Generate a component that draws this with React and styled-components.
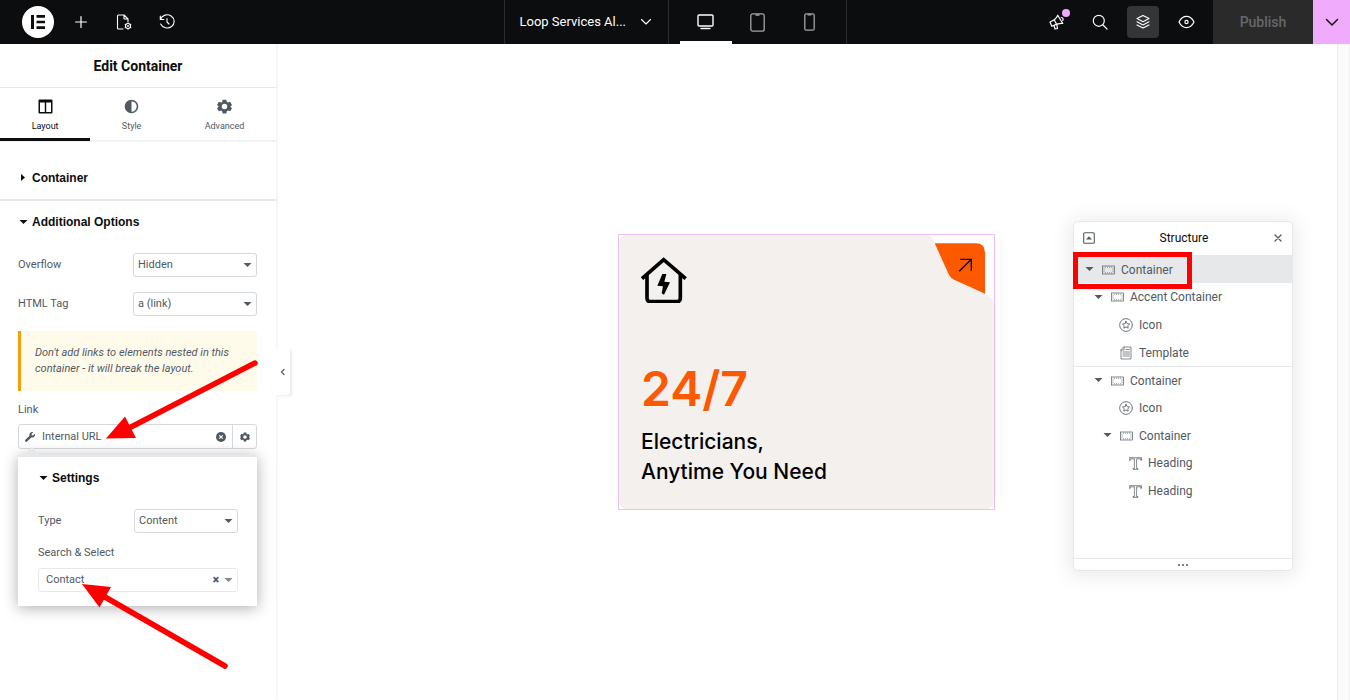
import React from "react";
import styled, { createGlobalStyle } from "styled-components";

const ink = "#0c0d0e";
const slate = "#515962";
const line = "#e6e8ea";
const control = "#d5d8dc";
const red = "#ff0000";

const GlobalStyle = createGlobalStyle`
  *, *::before, *::after { box-sizing: border-box; }
  body { margin: 0; background: #fff; color: ${slate}; font: 11px/16px Roboto, "Liberation Sans", sans-serif; }
  button, select, input { font: inherit; color: inherit; }
  button { padding: 0; border: 0; background: none; cursor: pointer; }
  h1, h2, h3, p, ul { margin: 0; padding: 0; }
  svg { display: block; flex: none; }
`;

const Page = styled.div`
  min-height: 100vh;
  display: flex;
  flex-direction: column;
  position: relative;
`;

/* Top bar */
const TopBar = styled.header`
  display: grid;
  grid-template-columns: 1fr auto 1fr;
  height: 44px;
  background: ${ink};
  color: #fff;
`;
const BarStart = styled.div`
  display: flex;
  align-items: center;
  gap: 11px;
  padding-left: 22px;
`;
const BarEnd = styled.div`
  display: flex;
  align-items: center;
  justify-content: flex-end;
  gap: 11px;
`;
const BarButton = styled.button`
  position: relative;
  width: 32px;
  height: 32px;
  display: grid;
  place-items: center;
  border-radius: 4px;
  background: ${(p) => (p.$on ? "#343537" : "none")};
`;
const Logo = styled(BarButton)`
  border-radius: 50%;
  background: #fff;
`;
const Dot = styled.span`
  position: absolute;
  top: 3px;
  right: 3px;
  width: 8px;
  height: 8px;
  border-radius: 50%;
  background: #f0abfc;
`;
const BarCenter = styled.div`
  display: flex;
`;
const DocButton = styled.button`
  width: 164px;
  display: flex;
  align-items: center;
  justify-content: space-between;
  padding: 0 16px 0 15px;
  border-left: 1px solid #2b2c2e;
  font-size: 13px;
`;
const Devices = styled.div`
  display: flex;
  padding: 0 10px 0 11px;
  border: solid #2b2c2e;
  border-width: 0 1px;
`;
const DeviceButton = styled.button`
  width: 52px;
  display: grid;
  place-items: center;
  color: ${(p) => (p.$on ? "#fff" : "#a4a5a6")};
  box-shadow: ${(p) => (p.$on ? "inset 0 -3px 0 #fff" : "none")};
`;
const PublishGroup = styled.div`
  display: flex;
  align-self: stretch;
`;
const Publish = styled.button`
  width: 100px;
  background: #2a2a2a;
  color: #66686a;
  font-size: 14px;
  font-weight: 500;
`;
const PublishMore = styled.button`
  width: 37px;
  display: grid;
  place-items: center;
  background: #f0abfc;
  color: ${ink};
`;

/* Editing panel */
const Body = styled.div`
  flex: 1;
  display: flex;
`;
const Sidebar = styled.aside`
  position: relative;
  flex: none;
  width: 276px;
  box-shadow: 0 0 3px rgba(0, 0, 0, 0.12);
`;
const PanelTitle = styled.h1`
  height: 44px;
  display: grid;
  place-items: center;
  border-bottom: 1px solid ${line};
  color: ${ink};
  font-size: 14px;
  font-weight: 700;
`;
const Tabs = styled.div`
  display: flex;
  height: 54px;
  border-bottom: 2px solid #f1f2f3;
`;
const Tab = styled.button`
  flex: 1 1 auto;
  height: 53px;
  padding-top: 7px;
  display: flex;
  flex-direction: column;
  align-items: center;
  justify-content: center;
  gap: 4px;
  font-size: 9px;
  color: ${(p) => (p.$on ? ink : slate)};
  border-bottom: 3px solid ${(p) => (p.$on ? ink : "transparent")};
`;
const Section = styled.section`
  border-bottom: ${(p) => (p.$last ? "0" : `2px solid ${line}`)};
  padding: 0 19px 0 18px;
`;
const Heading = styled.button`
  display: flex;
  align-items: center;
  gap: 4px;
  width: 100%;
  height: ${(p) => (p.$tall ? "57px" : "42px")};
  padding-top: ${(p) => (p.$tall ? "14px" : "0")};
  color: ${ink};
  font: 700 12px/16px "Liberation Sans", Arial, sans-serif;
`;
const Fields = styled.div`
  display: flex;
  flex-direction: column;
  gap: 15px;
  padding-top: 10px;
`;
const Field = styled.div`
  display: flex;
  align-items: center;
  justify-content: space-between;
`;
const SelectBox = styled.span`
  position: relative;
  display: flex;
  width: ${(p) => p.$width};
  svg { position: absolute; right: 5px; top: 9px; pointer-events: none; }
`;
const Select = styled.select`
  appearance: none;
  width: 100%;
  height: 24px;
  padding: 0 ${(p) => (p.$inset ? 7 : 4)}px;
  border: 1px solid ${(p) => (p.$inset ? line : control)};
  border-radius: 3px;
  background: #fff;
`;
const Notice = styled.p`
  padding: 14px;
  border-left: 3px solid #f59e0b;
  border-radius: 0 3px 3px 0;
  background: #fffbeb;
  font-style: italic;
`;
const LinkLabel = styled.h3`
  font-size: 11px;
  font-weight: 400;
  padding: 11px 0 6px;
`;
const LinkField = styled.div`
  display: flex;
  height: 25px;
  border: 1px solid ${control};
  border-radius: 3px;
`;
const LinkValue = styled.button`
  flex: 1;
  display: flex;
  align-items: center;
  gap: 7px;
  padding-left: 6px;
`;
const FieldIcon = styled.button`
  width: 24px;
  display: grid;
  place-items: center;
  border-left: 1px solid ${(p) => (p.$divided ? control : "transparent")};
`;
const Popover = styled.div`
  position: relative;
  margin-top: 6px;
  padding: 0 19px 14px 20px;
  border-top: 2px solid ${line};
  background: #fff;
  box-shadow: 0 2px 14px rgba(0, 0, 0, 0.32);
  &::before {
    content: "";
    position: absolute;
    left: 6px;
    top: -10px;
    border: solid transparent;
    border-width: 0 8px 8px;
    border-bottom-color: ${line};
  }
`;
const PopoverField = styled(Field)`
  padding-top: 10px;
`;
const SearchLabel = styled.label`
  display: block;
  padding: 12px 0 7px;
`;
const Clear = styled.button`
  position: absolute;
  right: 18px;
  top: 5px;
  width: 8px;
  line-height: 14px;
  font-weight: 900;
  font-size: 12px;
`;
const Collapse = styled.button`
  position: absolute;
  left: 276px;
  top: 305px;
  width: 14px;
  height: 46px;
  display: grid;
  place-items: center;
  background: #fff;
  border-radius: 0 3px 3px 0;
  box-shadow: 2px 1px 3px rgba(0, 0, 0, 0.09);
`;
const Marks = styled.svg`
  position: absolute;
  left: 0;
  top: 306px;
  pointer-events: none;
`;

/* Canvas */
const Canvas = styled.main`
  flex: 1;
  display: grid;
  place-items: center;
`;
const Gutter = styled.div`
  width: 13px;
  background: #fafafa;
  border-left: 1px solid #ececec;
  border-right: 1px solid #f1f1f1;
`;
const CardFrame = styled.div`
  border: 1px solid #efbdf8;
`;
const Card = styled.a`
  position: relative;
  display: flex;
  flex-direction: column;
  width: 375px;
  height: 274px;
  padding: 22px;
  border-radius: 8px;
  background: #f4f0ee;
  color: #000;
  text-decoration: none;
  font-family: Inter, "Liberation Sans", sans-serif;
`;
const Corner = styled.svg`
  position: absolute;
  top: 0;
  right: 0;
`;
const Figure = styled.span`
  margin-top: auto;
  color: #fc5900;
  font-size: 48px;
  line-height: 56px;
  font-weight: 600;
`;
const Caption = styled.span`
  padding-top: 10px;
  font-size: 21px;
  line-height: 30px;
  font-weight: 500;
`;

/* Structure window */
const Window = styled.section`
  position: absolute;
  right: 57px;
  top: 221px;
  width: 220px;
  border: 1px solid ${line};
  border-radius: 5px;
  background: #fff;
  box-shadow: 0 2px 20px 4px rgba(0, 0, 0, 0.08);
  font-size: 12px;
`;
const WindowBar = styled.header`
  display: flex;
  align-items: center;
  justify-content: space-between;
  height: 33px;
  padding: 0 9px 1px;
`;
const WindowTitle = styled.h2`
  color: ${ink};
  font-size: 12px;
  font-weight: 400;
`;
const Tree = styled.ul`
  list-style: none;
  display: grid;
  grid-auto-rows: 1fr;
  height: 249px;
`;
const Node = styled.li`
  display: flex;
  border-top: ${(p) => (p.$ruled ? `1px solid ${line}` : "0")};
  background: ${(p) => (p.$on ? line : "none")};
`;
const NodeButton = styled.button`
  flex: 1;
  display: flex;
  align-items: center;
  padding-top: 2px;
  padding-left: ${(p) => 10 + p.$depth * 9}px;
`;
const Twisty = styled.span`
  width: ${(p) => (p.$leaf ? "8px" : "17px")};
`;
const Glyph = styled.span`
  width: 14px;
  display: grid;
  place-items: center;
  margin-right: 6px;
`;
const WindowFoot = styled.footer`
  display: grid;
  place-items: center;
  height: 12px;
  margin-top: 54px;
  border-top: 1px solid ${line};
`;
const Highlight = styled.div`
  position: absolute;
  left: -1px;
  top: 30px;
  width: 119px;
  height: 37px;
  border: 5px solid ${red};
  pointer-events: none;
`;

const Line = ({ size = 16, width = size, height = size, box = "0 0 16 16", stroke = 1, children }) => (
  <svg width={width} height={height} viewBox={box} fill="none" stroke="currentColor" strokeWidth={stroke} strokeLinecap="round" strokeLinejoin="round" aria-hidden="true">
    {children}
  </svg>
);
const Caret = ({ right, fill = "currentColor" }) => (
  <svg width="10" height="7" viewBox="0 0 10 7" aria-hidden="true">
    <path fill={fill} d={right ? "M3 0 7 3.500 3 7z" : "M1.500 1h8L5.500 5z"} />
  </svg>
);
const Chevron = ({ stroke = 1.1 }) => (
  <Line width={12} height={8} box="0 0 12 8" stroke={stroke}><path d="M1.500 1.500 6 6l4.500-4.500" /></Line>
);
const Gear = ({ size }) => (
  <svg width={size} height={size} viewBox="0 0 24 24" fill="currentColor" aria-hidden="true">
    <path fillRule="evenodd" d="M9 1h6l.8 3.600 1.800 1L21 4.500l3 5.200-2.700 2.500L24 14.600l-3 5-3.500-1.200-1.800 1L15 23H9l-.8-3.600-1.800-1L3 19.600l-3-5 2.700-2.500L0 9.600l3-5.100 3.500 1.100 1.800-1zM12 7.600a4.400 4.400 0 1 0 0 8.800 4.400 4.400 0 0 0 0-8.800z" />
  </svg>
);

const glyphs = {
  box: (
    <svg width="13" height="10" viewBox="0 0 13 10" fill="none" stroke="currentColor" aria-hidden="true">
      <rect x=".5" y="1" width="12" height="8" strokeWidth=".7" />
      <path d="M3 2.200h7.500M3 7.800h7.500" strokeWidth=".8" strokeDasharray=".8 1.300" />
      <path d="M2 2.800v5M11 2.800v5" strokeWidth=".8" strokeDasharray=".8 1" />
    </svg>
  ),
  star: (
    <Line size={14} box="0 0 14 14" stroke={0.8}>
      <circle cx="7" cy="7" r="6.300" strokeDasharray="2.500 .5" />
      <path d="m7 3.300 1.100 2.300 2.500.4-1.800 1.700.4 2.500L7 9 4.800 10.200l.4-2.500L3.400 6l2.500-.4z" />
    </Line>
  ),
  page: (
    <Line width={12} height={14} box="0 0 12 14" stroke={0.7}>
      <path d="M4 1h7v12H1V4zM4 1v3H1M6 3.500h3.500M3 6h6.500M3 8h6.500M3 10h6.500" />
    </Line>
  ),
  text: (
    <Line size={13} box="0 0 13 13" stroke={0.7}>
      <path d="M.5.700h12v2.600h-.8v-1.500H7.600v9.700h1.400v.9H4v-.9h1.400V1.800H1.300v1.500H.5z" />
    </Line>
  ),
};

const nodes = [
  { label: "Container", glyph: "box", depth: 0, on: true },
  { label: "Accent Container", glyph: "box", depth: 1 },
  { label: "Icon", glyph: "star", depth: 3, leaf: true },
  { label: "Template", glyph: "page", depth: 3, leaf: true },
  { label: "Container", glyph: "box", depth: 1, ruled: true },
  { label: "Icon", glyph: "star", depth: 3, leaf: true },
  { label: "Container", glyph: "box", depth: 2 },
  { label: "Heading", glyph: "text", depth: 4, leaf: true },
  { label: "Heading", glyph: "text", depth: 4, leaf: true },
];

function Header() {
  return (
    <TopBar>
      <BarStart>
        <Logo aria-label="Elementor menu">
          <svg width="14" height="14" viewBox="0 0 14 14" fill={ink} aria-hidden="true">
            <path d="M0 0h3v14H0zM5.500 0H14v2.700H5.500zM5.500 5.700H14v2.600H5.500zM5.500 11.300H14V14H5.500z" />
          </svg>
        </Logo>
        <BarButton aria-label="Add element">
          <Line size={12} box="0 0 12 12" stroke={1.2}><path d="M6 .6v10.800M.6 6h10.800" /></Line>
        </BarButton>
        <BarButton aria-label="Page settings">
          <Line width={16} height={16} stroke={1.1}>
            <path d="M7 15H2.500a1 1 0 0 1-1-1V2a1 1 0 0 1 1-1H8l4 4v2.500M8 1v3.500a.5.500 0 0 0 .5.500H12" />
            <circle cx="12" cy="12" r="2.500" />
            <circle cx="12" cy="12" r=".4" />
            <path d="M12 8.800v.6M12 14.600v.6M9.200 10.400l.5.300M14.300 13.300l.5.300M9.200 13.600l.5-.3M14.300 10.700l.5-.3" />
          </Line>
        </BarButton>
        <BarButton aria-label="History">
          <Line size={16} stroke={1.1}>
            <path d="M1.500 5.300A7 6.600 0 1 1 1.700 10M1.300 2v3.500h3.500M8 4.500V8l2 2" />
          </Line>
        </BarButton>
      </BarStart>
      <BarCenter>
        <DocButton>
          Loop Services Al...
          <Chevron />
        </DocButton>
        <Devices>
          <DeviceButton $on aria-label="Desktop">
            <Line width={17} height={16} box="0 0 17 16" stroke={1.400}>
              <rect x="1" y="1" width="15" height="11" rx="1" />
              <path d="M4 14.500h9" />
            </Line>
          </DeviceButton>
          <DeviceButton aria-label="Tablet">
            <Line width={15} height={19} box="0 0 15 19" stroke={1.300}>
              <rect x=".8" y=".8" width="13.400" height="17.400" rx="2" />
              <path d="M6 2h3" />
            </Line>
          </DeviceButton>
          <DeviceButton aria-label="Mobile">
            <Line width={11} height={18} box="0 0 11 18" stroke={1.300}>
              <rect x=".8" y=".8" width="9.400" height="16.400" rx="1.500" />
              <path d="M4 1.800h3" />
            </Line>
          </DeviceButton>
        </Devices>
      </BarCenter>
      <BarEnd>
        <BarButton aria-label="What's new">
          <Line size={16} stroke={1.2}>
            <path d="M8.700 1.200C8 4 5 6.300 1 8l1.800 4.300C7 10 10 9 13.800 9.500zM5.300 6l2.300 4.300M5 11.300 6 15l2.500-.5-.7-4M12.300 3.500q2.500.5 1.500 3" />
          </Line>
          <Dot />
        </BarButton>
        <BarButton aria-label="Finder">
          <Line size={16} stroke={1.200}><circle cx="6.800" cy="6.800" r="5.500" /><path d="m11 11 4 4" /></Line>
        </BarButton>
        <BarButton $on aria-label="Structure">
          <Line size={16} stroke={1.100}>
            <path d="M8 1.500 14 4.600 8 7.700 2 4.600zM2 7.800l6 3.100 6-3.100M2 10.900 8 14l6-3.100" />
          </Line>
        </BarButton>
        <BarButton aria-label="Preview">
          <Line width={17} height={14} box="0 0 17 14" stroke={1.200}>
            <path d="M1 7C3 3 5.500 1.400 8.500 1.400S14 3 16 7c-2 4-4.500 5.600-7.500 5.600S3 11 1 7z" />
            <circle cx="8.500" cy="7" r="1.600" />
          </Line>
        </BarButton>
        <PublishGroup>
          <Publish>Publish</Publish>
          <PublishMore aria-label="Save options"><Line width={14} height={9} box="0 0 14 9" stroke={1.500}><path d="m1.500 1.500 5.500 5.500 5.500-5.500" /></Line></PublishMore>
        </PublishGroup>
      </BarEnd>
    </TopBar>
  );
}

function EditPanel() {
  return (
    <Sidebar>
      <PanelTitle>Edit Container</PanelTitle>
      <Tabs>
        <Tab $on>
          <svg width="15" height="15" viewBox="0 0 15 15" aria-hidden="true">
            <path fill="currentColor" fillRule="evenodd" d="M1.500.5h12a1 1 0 0 1 1 1v12a1 1 0 0 1-1 1h-12a1 1 0 0 1-1-1v-12a1 1 0 0 1 1-1zM2 3.500V13h4.800V3.500zM8.200 3.500V13H13V3.500z" />
          </svg>
          Layout
        </Tab>
        <Tab>
          <svg width="15" height="15" viewBox="0 0 15 15" aria-hidden="true">
            <circle cx="7.500" cy="7.500" r="6" fill="none" stroke="currentColor" strokeWidth="1.600" />
            <path fill="currentColor" d="M7.500 1.500v12a6 6 0 0 1 0-12z" />
          </svg>
          Style
        </Tab>
        <Tab>
          <Gear size={15} />
          Advanced
        </Tab>
      </Tabs>
      <Section>
        <Heading $tall><Caret right />Container</Heading>
      </Section>
      <Section $last>
        <Heading><Caret />Additional Options</Heading>
        <Fields>
          <Field>
            <label htmlFor="overflow">Overflow</label>
            <SelectBox $width="124px">
              <Select id="overflow"><option>Hidden</option></Select>
              <Caret />
            </SelectBox>
          </Field>
          <Field>
            <label htmlFor="tag">HTML Tag</label>
            <SelectBox $width="124px">
              <Select id="tag"><option>a (link)</option></Select>
              <Caret />
            </SelectBox>
          </Field>
          <Notice>Don't add links to elements nested in this container - it will break the layout.</Notice>
        </Fields>
        <LinkLabel>Link</LinkLabel>
        <LinkField>
          <LinkValue>
            <svg width="10" height="10" viewBox="0 0 512 512" fill="currentColor" aria-hidden="true">
              <path d="M507.700 109.100c-2.200-9-13.500-12.100-20.100-5.500l-74.400 74.400-67.900-11.300-11.300-67.900 74.400-74.400c6.600-6.600 3.400-17.900-5.700-20.200-47.400-11.700-99.600.9-136.600 37.900-39.600 39.600-50.500 97.100-34.100 147.200L19 402c-25 25-25 65.500 0 90.500s65.500 25 90.500 0l213.200-213.200c50.100 16.700 107.500 5.700 147.400-34.200 37.100-37.100 49.700-89.300 37.600-136z" />
            </svg>
            Internal URL
          </LinkValue>
          <FieldIcon aria-label="Remove link">
            <svg width="10" height="10" viewBox="0 0 10 10" aria-hidden="true">
              <circle cx="5" cy="5" r="5" fill="currentColor" />
              <path d="m3.300 3.300 3.400 3.400m0-3.400L3.300 6.700" stroke="#fff" strokeWidth="1.200" />
            </svg>
          </FieldIcon>
          <FieldIcon $divided aria-label="Link settings"><Gear size={10} /></FieldIcon>
        </LinkField>
        <Popover>
          <Heading><Caret />Settings</Heading>
          <PopoverField>
            <label htmlFor="type">Type</label>
            <SelectBox $width="104px">
              <Select id="type"><option>Content</option></Select>
              <Caret />
            </SelectBox>
          </PopoverField>
          <SearchLabel htmlFor="target">Search &amp; Select</SearchLabel>
          <SelectBox $width="100%">
            <Select $inset id="target"><option>Contact</option></Select>
            <Clear aria-label="Clear selection">×</Clear>
            <Caret fill="#888" />
          </SelectBox>
        </Popover>
      </Section>
      <Collapse aria-label="Hide panel">
        <Line width={6} height={8} box="0 0 6 8" stroke={1.200}><path d="M4 1.500 1.500 4 4 6.500" /></Line>
      </Collapse>
      <Marks width="276" height="330" viewBox="0 350 276 330" fill={red} stroke={red} strokeLinecap="round" aria-hidden="true">
        <path strokeWidth="5.500" d="M255 363 131 427M225 666 105 597" />
        <path stroke="none" d="m106 438.500 19-22 11 21.500zM82 584l29 3-11.500 20.500z" />
      </Marks>
    </Sidebar>
  );
}

function ServiceCard() {
  return (
    <CardFrame>
      <Card href="#contact">
        <svg width="46" height="46" viewBox="0 0 138 138" fill="none" stroke="#000" strokeWidth="11" aria-hidden="true">
          <path d="M3 65 68 8l66 57M18 54v70q0 10 10 10h80q10 0 10-10V54" />
          <path fill="#000" stroke="none" d="M64 51h12l-6 23 17 2-18 37-7-4 4-21-17-2z" />
        </svg>
        <Figure>24/7</Figure>
        <Caption>Electricians,<br />Anytime You Need</Caption>
        <Corner width="70" height="70" viewBox="0 0 210 210" aria-hidden="true">
          <path fill="#fff" d="M8 0q14 2 20 14l48 110q4 6 14 12l95 42q23 12 25 30V0z" />
          <path fill="#fc5900" d="M32 25h123q28 0 28 28v123l-93-42q-10-5-15-14z" />
          <path fill="none" stroke="#000" strokeWidth="4" d="m106 109 36-36m-33 0h33v34" />
        </Corner>
      </Card>
    </CardFrame>
  );
}

function Structure() {
  return (
    <Window>
      <WindowBar>
        <button aria-label="Collapse all">
          <svg width="12" height="12" viewBox="0 0 12 12" aria-hidden="true">
            <rect x=".7" y=".7" width="10.600" height="10.600" rx="1" fill="none" stroke="currentColor" strokeWidth="1.100" />
            <path fill="currentColor" d="M3 7.500 6 4.200l3 3.300z" />
          </svg>
        </button>
        <WindowTitle>Structure</WindowTitle>
        <button aria-label="Close">
          <Line size={10} box="0 0 10 10" stroke={1.300}><path d="m2 2 6 6m0-6-6 6" /></Line>
        </button>
      </WindowBar>
      <Tree>
        {nodes.map((n, i) => (
          <Node key={i} $on={n.on} $ruled={n.ruled}>
            <NodeButton $depth={n.depth}>
              <Twisty $leaf={n.leaf}>{!n.leaf && <Caret />}</Twisty>
              <Glyph>{glyphs[n.glyph]}</Glyph>
              {n.label}
            </NodeButton>
          </Node>
        ))}
      </Tree>
      <WindowFoot>
        <svg width="10" height="2" viewBox="0 0 10 2" fill="currentColor" aria-hidden="true">
          <circle cx="1" cy="1" r="1" /><circle cx="5" cy="1" r="1" /><circle cx="9" cy="1" r="1" />
        </svg>
      </WindowFoot>
      <Highlight />
    </Window>
  );
}

export default function App() {
  return (
    <Page>
      <GlobalStyle />
      <Header />
      <Body>
        <EditPanel />
        <Canvas><ServiceCard /></Canvas>
        <Gutter />
      </Body>
      <Structure />
    </Page>
  );
}
